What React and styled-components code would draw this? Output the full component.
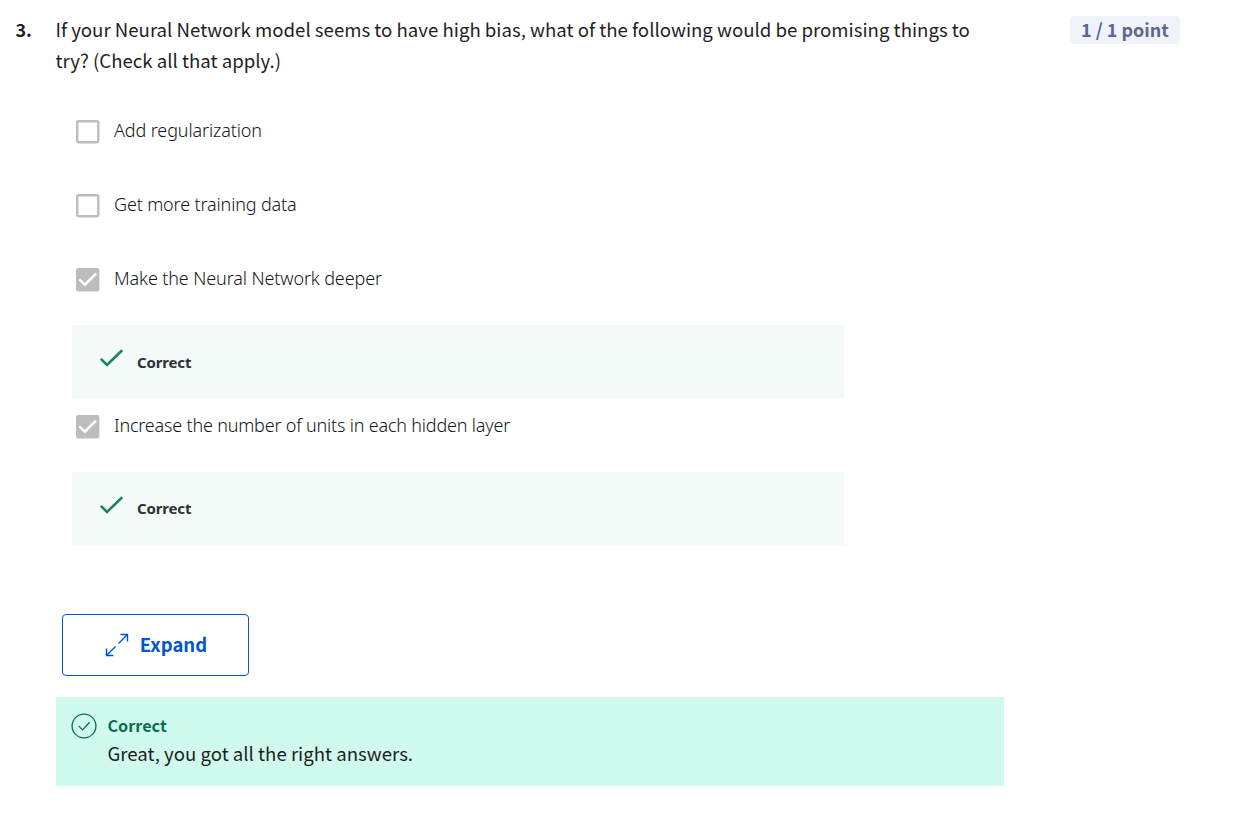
import React from 'react';
import styled, { createGlobalStyle } from 'styled-components';

const GlobalStyle = createGlobalStyle`
  * { box-sizing: border-box; }
  html, body { margin: 0; background: #fff; }
  body { font-family: "Noto Sans CJK SC", "Noto Sans", sans-serif; color: #1f1f1f; }
`;

const Page = styled.main`
  display: grid;
  grid-template-columns: 40.5px 948px 1fr;
  padding: 14px 55px 0 15.5px;
  min-height: 829px;
`;

const Number = styled.div`
  font-size: 18px;
  font-weight: 700;
  line-height: 31px;
`;

const Body = styled.section`
  display: flex;
  flex-direction: column;
`;

const Prompt = styled.p`
  margin: -1px 0 1px -0.5px;
  height: 62px;
  font-size: 18.64px;
  line-height: 31px;
  white-space: nowrap;
`;

const Points = styled.div`
  justify-self: end;
  width: 110px;
  height: 28px;
  margin-top: 2px;
  border-radius: 4px;
  background: #f0f4fa;
  color: #5b6790;
  font-size: 18px;
  font-weight: 700;
  line-height: 26px;
  text-align: center;
  white-space: nowrap;
`;

const Options = styled.div`
  display: flex;
  flex-direction: column;
  width: 772px;
  margin: 44px 0 0 16px;
`;

const Option = styled.label`
  display: flex;
  align-items: flex-start;
  gap: 14px;
  height: ${(p) => p.$height}px;
  padding-left: 4px;
`;

const Checkbox = styled.span`
  display: block;
  width: 24px;
  height: 24px;
`;

const OptionText = styled.span`
  margin-top: -2px;
  color: #14171a;
  font-family: "Noto Sans", sans-serif;
  font-size: 18px;
  font-weight: 300;
  line-height: 24px;
  letter-spacing: ${(p) => p.$spacing}px;
  white-space: nowrap;
`;

const Feedback = styled.div`
  display: flex;
  gap: 13px;
  height: 73px;
  margin-bottom: ${(p) => p.$after}px;
  padding: 24px 27px;
  background: #f4faf8;
`;

const FeedbackText = styled.strong`
  margin-top: ${(p) => p.$top}px;
  color: #2d3236;
  font-family: "Noto Sans", sans-serif;
  font-size: 15px;
  line-height: 24px;
  letter-spacing: -0.15px;
`;

const ExpandButton = styled.button`
  display: flex;
  align-items: center;
  justify-content: center;
  gap: 11px;
  width: 187px;
  height: 62px;
  margin: 69px 0 21px 6px;
  padding: 0 0 0 1px;
  border: 1.5px solid #0056d2;
  border-radius: 4px;
  background: #fff;
  color: #0056d2;
  font-family: inherit;
  font-size: 18.5px;
  font-weight: 700;
`;

const ButtonLabel = styled.span`
  padding-bottom: 2px;
`;

const Result = styled.div`
  display: flex;
  gap: 10.5px;
  height: 89px;
  padding: 16px 15px;
  background: #d0faed;
`;

const ResultTitle = styled.strong`
  display: block;
  margin-top: -1px;
  color: #087051;
  font-size: 16.2px;
  line-height: 26px;
`;

const ResultText = styled.p`
  margin: 0;
  font-size: 18.64px;
  line-height: 30px;
`;

const CheckboxMark = ({ checked }) => (
  <svg width="24" height="24" viewBox="0 0 24 24" fill="none">
    {checked ? (
      <>
        <rect x="0" y="0" width="23.4" height="23.4" rx="2.2" fill="#bdbdbd" />
        <path d="M3.3 11.4 8.9 16.6 20 5.6" stroke="#fff" strokeWidth="2.6" />
      </>
    ) : (
      <rect x="1.2" y="1.2" width="21.1" height="21.1" rx="1.2" stroke="#bdbdbd" strokeWidth="2.4" />
    )}
  </svg>
);

const GreenCheck = () => (
  <svg width="25" height="20" viewBox="0 0 25 20" fill="none">
    <path d="M1.8 9.8 8 16 23.2 1.2" stroke="#1f8354" strokeWidth="2.6" />
  </svg>
);

const ExpandIcon = () => (
  <svg width="24" height="24" viewBox="0 0 24 24" fill="none" stroke="#0056d2" strokeWidth="1.4">
    <path d="M13.5 10.5 22.5 1.5M15.5 1.5h7v7M10.5 13.5 1.5 22.5M1.5 15.5v7h7" />
  </svg>
);

const ResultIcon = () => (
  <svg width="26" height="26" viewBox="0 0 26 26" fill="none" stroke="#087051" strokeWidth="1.3">
    <circle cx="13" cy="13" r="11.9" />
    <path d="m7.8 13.1 3.8 3.8 7-7.7" />
  </svg>
);

const options = [
  { text: 'Add regularization', height: 74, spacing: -0.12 },
  { text: 'Get more training data', height: 74, spacing: -0.15 },
  { text: 'Make the Neural Network deeper', height: 57, spacing: -0.12, checked: true, after: 17, top: 1 },
  { text: 'Increase the number of units in each hidden layer', height: 57, spacing: -0.2, checked: true, after: 0, top: 0 },
];

export default function App() {
  return (
    <>
      <GlobalStyle />
      <Page>
        <Number>3.</Number>
        <Body>
          <Prompt>
            If your Neural Network model seems to have high bias, what of the following would be promising things to
            <br />
            try? (Check all that apply.)
          </Prompt>
          <Options>
            {options.map((o) => (
              <React.Fragment key={o.text}>
                <Option $height={o.height}>
                  <Checkbox>
                    <CheckboxMark checked={o.checked} />
                  </Checkbox>
                  <OptionText $spacing={o.spacing}>{o.text}</OptionText>
                </Option>
                {o.checked && (
                  <Feedback $after={o.after}>
                    <GreenCheck />
                    <FeedbackText $top={o.top}>Correct</FeedbackText>
                  </Feedback>
                )}
              </React.Fragment>
            ))}
          </Options>
          <ExpandButton>
            <ExpandIcon />
            <ButtonLabel>Expand</ButtonLabel>
          </ExpandButton>
          <Result>
            <ResultIcon />
            <div>
              <ResultTitle>Correct</ResultTitle>
              <ResultText>Great, you got all the right answers.</ResultText>
            </div>
          </Result>
        </Body>
        <Points>1 / 1 point</Points>
      </Page>
    </>
  );
}
